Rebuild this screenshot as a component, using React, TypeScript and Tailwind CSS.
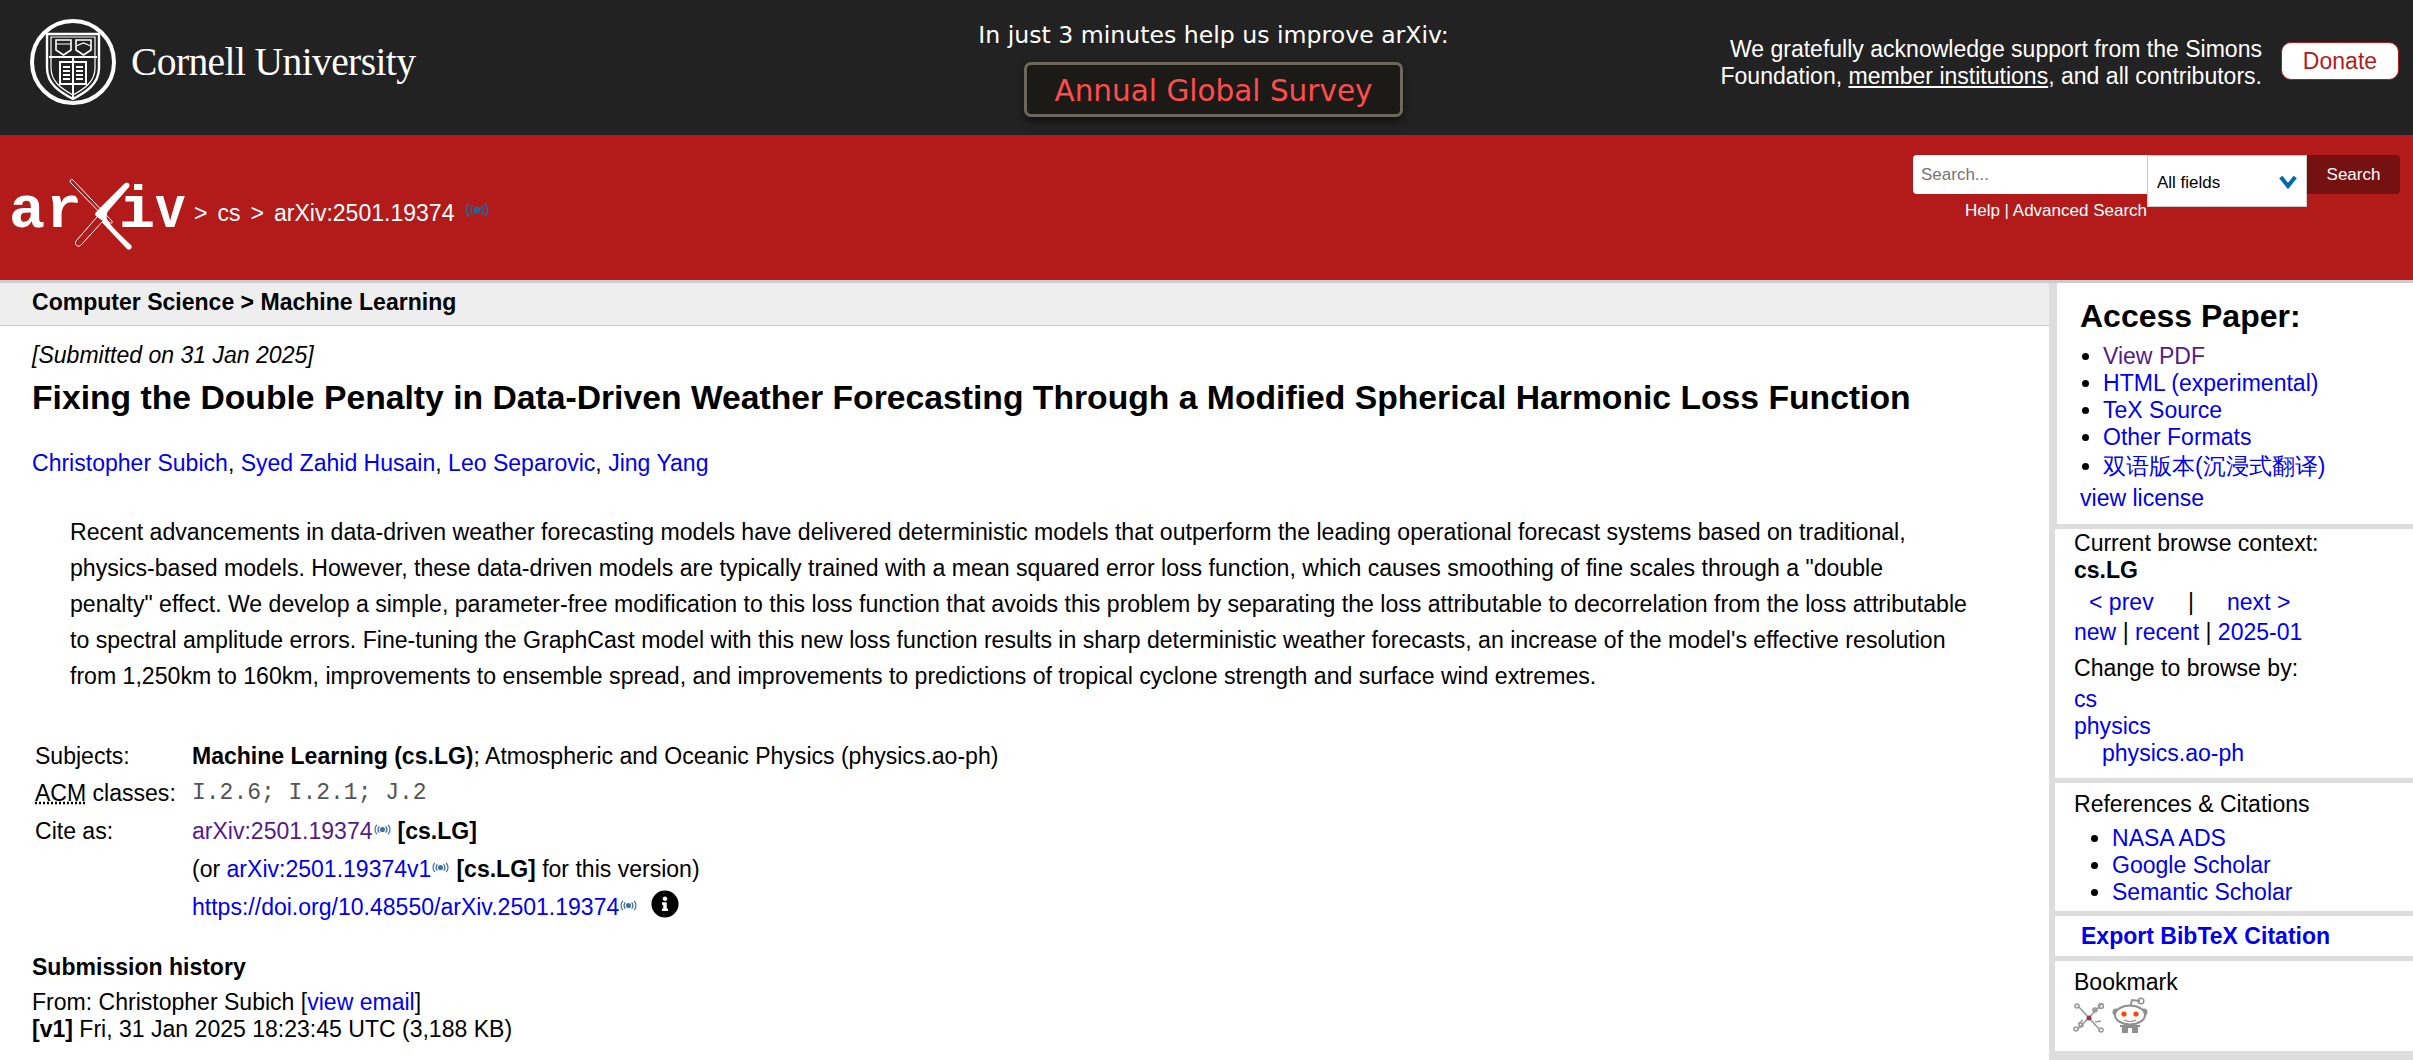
import React from "react";
import { FaInfoCircle } from "react-icons/fa";

const LINK = "text-[#0000ee]";
const VISITED = "text-[#551a8b]";

function Wave({ className = "" }: { className?: string }) {
  return (
    <svg viewBox="0 0 24 16" className={className} fill="none" stroke="#2a6496" strokeWidth="1.900" aria-hidden="true">
      <circle cx="12" cy="8" r="3.600" fill="#2a6496" stroke="none" />
      <path d="M7.500 3.500c-2 2.600-2 6.400 0 9M16.500 3.500c2 2.600 2 6.400 0 9" />
      <path d="M4 1.500c-3.200 3.800-3.200 9.200 0 13M20 1.500c3.200 3.800 3.200 9.200 0 13" />
    </svg>
  );
}

function Seal() {
  return (
    <svg viewBox="0 0 86 88" className="w-[86px] h-[88px] shrink-0" fill="none" stroke="#fff" aria-hidden="true">
      <circle cx="43" cy="44" r="41" strokeWidth="4" />
      <path d="M17 16H69V50C69 66 56 74 43 81C30 74 17 66 17 50Z" strokeWidth="2.400" />
      <path d="M21 19H65V50C65 64 54 71 43 77C32 71 21 64 21 50Z" strokeWidth="1.200" />
      <path d="M19 39H67" strokeWidth="2.200" />
      <path d="M26 22H41V32L33.500 37L26 32Z" strokeWidth="1.600" />
      <path d="M46 22H61V32L53.500 37L46 32Z" strokeWidth="1.600" />
      <path d="M26 26H41M46 28L53.500 25L61 28" strokeWidth="1.200" />
      <path d="M30 44H56V66H30ZM43 39V80" strokeWidth="2" />
      <path d="M33 49H40M33 53H40M33 57H40M33 61H40M46 49H53M46 53H53M46 57H53M46 61H53" strokeWidth="1.800" />
    </svg>
  );
}

function ArxivLogo() {
  return (
    <svg viewBox="-6 0 186 78" className="w-[186px] h-[78px] shrink-0" aria-label="arXiv">
      <g fill="#fff" fontFamily="'Liberation Mono', monospace" fontWeight="700" fontSize="60">
        <text x="-2" y="53">a</text>
        <text x="35" y="53">r</text>
        <text x="108" y="53">i</text>
        <text transform="translate(144 53) scale(0.85 1)">v</text>
      </g>
      <path d="M51 4L60 2L110 65L104 75Z" fill="#b31b1b" />
      <path d="M60 9C58 7 60 4 62 6L100 46C103 49 100 50 98 48Z" fill="#b31b1b" stroke="#fff" strokeWidth="1" />
      <path d="M113 10C116 7 120 10 118 13L98 36C92 44 96 48 120 71C122 74 119 77 116 75L85 42C83 40 85 38 87 36Z" fill="#fff" />
      <path d="M92 47L70 71C67 74 63 71 65 67L86 43" fill="#b31b1b" stroke="#fff" strokeWidth="1" />
    </svg>
  );
}

function ScienceIcon() {
  return (
    <svg viewBox="0 0 32 32" className="w-[32px] h-[32px]" fill="none" stroke="#9a9a9a" strokeWidth="1.600" aria-hidden="true">
      <path d="M5 5L27 29M28 4L4 29M10 19L5 23M20 10L25 7M22 21L28 20" />
      <circle cx="4" cy="5" r="2" />
      <circle cx="28" cy="5" r="2.400" />
      <circle cx="22" cy="9" r="2" />
      <circle cx="3" cy="28" r="2" />
      <circle cx="8" cy="24" r="2" />
      <circle cx="28" cy="29" r="2" />
      <circle cx="16" cy="17" r="2.500" fill="#a03050" stroke="none" />
    </svg>
  );
}

function RedditIcon() {
  return (
    <svg viewBox="0 0 36 36" className="w-[36px] h-[36px]" aria-hidden="true">
      <path d="M18 11L20 3L28 4" fill="none" stroke="#8f8f8f" strokeWidth="1.800" />
      <circle cx="29" cy="4" r="2.800" fill="none" stroke="#8f8f8f" strokeWidth="1.500" />
      <circle cx="4" cy="15" r="3.500" fill="#8f8f8f" />
      <circle cx="32" cy="15" r="3.500" fill="#8f8f8f" />
      <ellipse cx="18" cy="18" rx="15" ry="9.500" fill="#fff" stroke="#8f8f8f" strokeWidth="2" />
      <circle cx="12" cy="17" r="2.600" fill="#ff4500" />
      <circle cx="24" cy="17" r="2.600" fill="#ff4500" />
      <path d="M12 23Q18 26 24 23" fill="none" stroke="#8f8f8f" strokeWidth="1.200" />
      <path d="M8 28H28V30H26V36H20V31H16V36H10V30H8Z" fill="#8f8f8f" />
    </svg>
  );
}

function Bullet({ children }: { children: React.ReactNode }) {
  return <li className="list-disc marker:text-black">{children}</li>;
}

function Sidebar() {
  return (
    <aside className="w-[364px] shrink-0 bg-[#dddddd] pl-[6px] flex flex-col gap-[5px] pb-[9px] leading-[27px]">
      <section className="bg-white ml-[2px] h-[241px] pl-[23px] pt-[14px]">
        <h2 className="font-bold text-[32px] leading-[38px] text-black">Access Paper:</h2>
        <ul className="pl-[23px] mt-[8px] text-[#0000ee]">
          <Bullet><span className={VISITED}>View PDF</span></Bullet>
          <Bullet>HTML (experimental)</Bullet>
          <Bullet>TeX Source</Bullet>
          <Bullet>Other Formats</Bullet>
          <Bullet><span className="leading-[31px]">双语版本(沉浸式翻译)</span></Bullet>
        </ul>
        <div className={`${LINK} mt-[3px]`}>view license</div>
      </section>
      <section className="bg-white h-[249px] pl-[19px] pt-[1px]">
        <div>Current browse context:</div>
        <div className="font-bold">cs.LG</div>
        <div className={`flex mt-[5px] ${LINK}`}>
          <span className="ml-[15px] w-[99px]">&lt; prev</span>
          <span className="text-black w-[39px]">|</span>
          <span>next &gt;</span>
        </div>
        <div className="mt-[3px]"><span className={LINK}>new</span> | <span className={LINK}>recent</span> | <span className={LINK}>2025-01</span></div>
        <div className="mt-[9px]">Change to browse by:</div>
        <div className={`mt-[4px] ${LINK}`}>cs</div>
        <div className={LINK}>physics</div>
        <div className={`pl-[28px] ${LINK}`}>physics.ao-ph</div>
      </section>
      <section className="bg-white h-[128px] pl-[19px] pt-[8px]">
        <div>References &amp; Citations</div>
        <ul className="pl-[38px] mt-[7px] text-[#0000ee]">
          <Bullet>NASA ADS</Bullet>
          <Bullet>Google Scholar</Bullet>
          <Bullet>Semantic Scholar</Bullet>
        </ul>
      </section>
      <section className="bg-white h-[40px] pl-[26px] flex items-center">
        <span className={`font-bold ${LINK}`}>Export BibTeX Citation</span>
      </section>
      <section className="bg-white flex-1 pl-[19px] pt-[8px]">
        <div>Bookmark</div>
        <div className="flex items-end gap-[7px] -ml-[1px] mt-[1px]">
          <ScienceIcon />
          <RedditIcon />
        </div>
      </section>
    </aside>
  );
}

function Meta() {
  return (
    <div className="mt-[44px] ml-[3px] grid grid-cols-[157px_1fr] grid-rows-[36px_38px_38px_38px_38px] items-center">
      <div>Subjects:</div>
      <div><b>Machine Learning (cs.LG)</b>; Atmospheric and Oceanic Physics (physics.ao-ph)</div>
      <div><span className="underline decoration-dotted">ACM</span> classes:</div>
      <div className="font-['Liberation_Mono',monospace] text-[#555] text-[23px]">I.2.6; I.2.1; J.2</div>
      <div>Cite as:</div>
      <div className="flex items-center">
        <span className={VISITED}>arXiv:2501.19374</span>
        <Wave className="w-[17px] h-[13px] ml-[1px] -mt-[4px] opacity-90" />
        <b className="ml-[7px]">[cs.LG]</b>
      </div>
      <div />
      <div className="flex items-center">
        <span>(or&nbsp;</span><span className={LINK}>arXiv:2501.19374v1</span>
        <Wave className="w-[17px] h-[13px] ml-[1px] -mt-[4px] opacity-90" />
        <b className="ml-[7px]">[cs.LG]</b><span>&nbsp;for this version)</span>
      </div>
      <div />
      <div className="flex items-center">
        <span className={LINK}>https://doi.org/10.48550/arXiv.2501.19374</span>
        <Wave className="w-[17px] h-[13px] ml-[1px] -mt-[4px] opacity-90" />
        <FaInfoCircle className="w-[28px] h-[28px] ml-[14px] -mt-[6px] text-black" />
      </div>
    </div>
  );
}

export default function App() {
  return (
    <div className="w-[2413px] h-[1060px] overflow-hidden flex flex-col bg-white text-black font-['Liberation_Sans',Arial,sans-serif] text-[23.040px] leading-[27px]">
      <header className="h-[135px] shrink-0 bg-[#222222] flex items-start text-white">
        <div className="w-[900px] shrink-0 flex items-center pl-[30px] pt-[18px]">
          <Seal />
          <span className="ml-[15px] -mt-[1px] font-['Liberation_Serif',serif] text-[39.500px] leading-[44px] tracking-[-0.600px] text-white">Cornell University</span>
        </div>
        <div className="w-[627px] shrink-0 flex flex-col items-center font-['DejaVu_Sans',sans-serif] pt-[20px]">
          <div className="text-[23.600px] leading-[30px]">In just 3 minutes help us improve arXiv:</div>
          <div className="mt-[12px] w-[379px] h-[55px] flex items-center justify-center rounded-[7px] border-[3px] border-[#6e685c] bg-[#1c1a17] text-[#ff4d4d] text-[29.500px] pt-[4px] shadow-[0_4px_8px_rgba(0,0,0,0.55)]">Annual Global Survey</div>
        </div>
        <div className="flex-1 flex items-start justify-end pr-[14px] pt-[36px]">
          <div className="text-right whitespace-nowrap">
            We gratefully acknowledge support from the Simons<br />
            Foundation, <span className="underline">member institutions</span>, and all contributors.
          </div>
          <div className="ml-[19px] mt-[6px] w-[118px] h-[38px] bg-white rounded-[10px] border border-[#b31b1b] text-[#b31b1b] flex items-center justify-center">Donate</div>
        </div>
      </header>

      <div className="h-[145px] shrink-0 bg-[#b31b1b] flex items-start text-white">
        <div className="pl-[5px] pt-[39px] flex items-center">
          <ArxivLogo />
          <div className="ml-[3px] mt-[1px] flex items-center gap-[10px] text-white whitespace-pre">
            <span>&gt;</span>
            <span>cs</span>
            <span>&gt;</span>
            <span>arXiv:2501.19374</span>
            <Wave className="w-[24px] h-[18px] -mt-[8px]" />
          </div>
        </div>
        <div className="ml-auto mr-[13px] mt-[20px] flex items-start text-[17px]">
          <div className="w-[234px] flex flex-col items-end">
            <div className="w-full h-[39px] bg-white rounded-l-[4px] flex items-center pl-[8px] text-[#757575] pb-[1px]">Search...</div>
            <div className="mt-[7px] leading-[20px] whitespace-nowrap text-white">Help | Advanced Search</div>
          </div>
          <div className="w-[160px] h-[52px] bg-white border border-[#cccccc] text-black flex items-center justify-between pl-[9px] pr-[9px] pt-[2px]">
            <span>All fields</span>
            <svg viewBox="0 0 20 16" className="w-[18px] h-[15px] -mt-[2px]" fill="none" stroke="#0068ac" strokeWidth="4.500" aria-hidden="true">
              <path d="M2 3L10 13L18 3" />
            </svg>
          </div>
          <div className="w-[93px] h-[39px] bg-[#751111] rounded-r-[4px] text-white flex items-center justify-center">Search</div>
        </div>
      </div>

      <div className="h-[3px] shrink-0 bg-[#cccccc]" />

      <div className="flex-1 min-h-0 flex">
        <main className="flex-1 min-w-0">
          <div className="h-[43px] bg-[#eeeeee] border-b border-[#cccccc] pl-[32px] pb-[3px] flex items-center font-bold">Computer Science &gt; Machine Learning</div>
          <div className="pl-[32px]">
            <div className="italic mt-[16px]">[Submitted on 31 Jan 2025]</div>
            <h1 className="mt-[8px] text-[33.700px] leading-[40px] font-bold">Fixing the Double Penalty in Data-Driven Weather Forecasting Through a Modified Spherical Harmonic Loss Function</h1>
            <div className={`mt-[33px] ${LINK}`}>
              Christopher Subich<span className="text-black">, </span>Syed Zahid Husain<span className="text-black">, </span>Leo Separovic<span className="text-black">, </span>Jing Yang
            </div>
            <p className="mt-[37px] ml-[38px] whitespace-nowrap leading-[36px] text-[23.100px]">
              Recent advancements in data-driven weather forecasting models have delivered deterministic models that outperform the leading operational forecast systems based on traditional,<br />
              physics-based models. However, these data-driven models are typically trained with a mean squared error loss function, which causes smoothing of fine scales through a "double<br />
              penalty" effect. We develop a simple, parameter-free modification to this loss function that avoids this problem by separating the loss attributable to decorrelation from the loss attributable<br />
              to spectral amplitude errors. Fine-tuning the GraphCast model with this new loss function results in sharp deterministic weather forecasts, an increase of the model's effective resolution<br />
              from 1,250km to 160km, improvements to ensemble spread, and improvements to predictions of tropical cyclone strength and surface wind extremes.
            </p>
            <Meta />
            <div className="mt-[28px] font-bold">Submission history</div>
            <div className="mt-[8px]">From: Christopher Subich [<span className={LINK}>view email</span>]</div>
            <div><b>[v1]</b> Fri, 31 Jan 2025 18:23:45 UTC (3,188 KB)</div>
          </div>
        </main>
        <Sidebar />
      </div>
    </div>
  );
}
